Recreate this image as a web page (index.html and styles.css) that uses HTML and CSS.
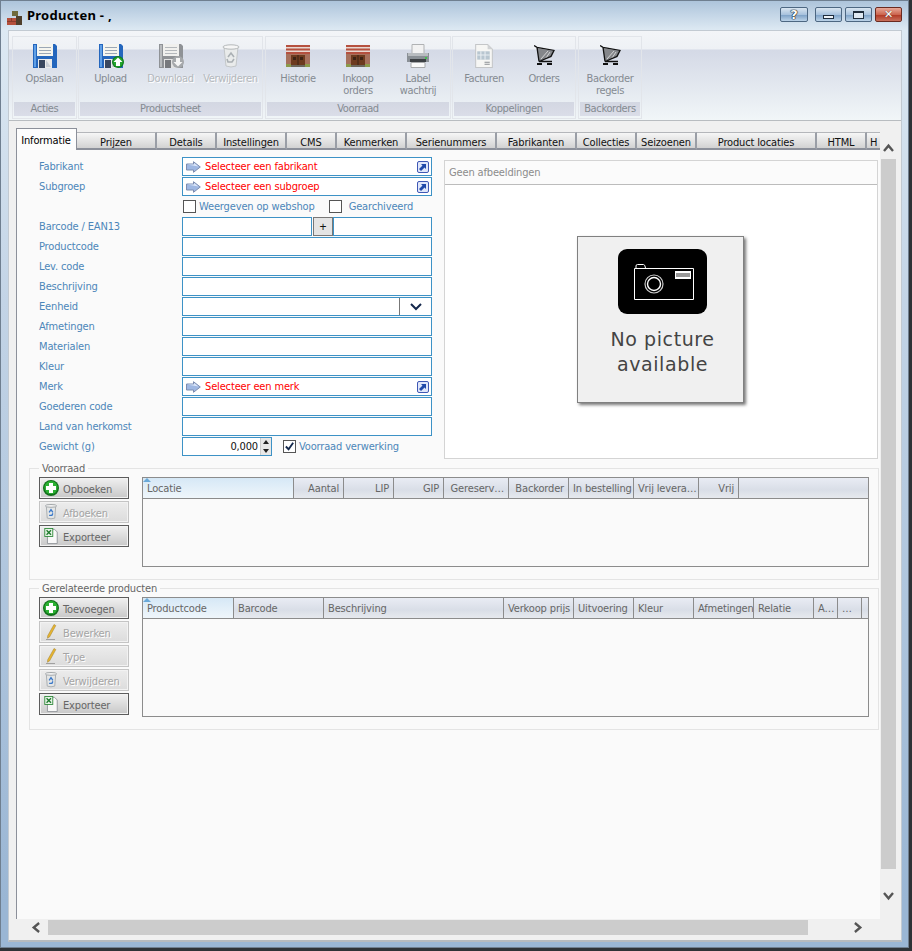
FILE: index.html
```html
<!DOCTYPE html>
<html lang="nl">
<head>
    <meta charset="UTF-8">
    <title>Producten</title>
    <link rel="stylesheet" href="styles.css">
</head>
<body>

<svg class="sprite" xmlns="http://www.w3.org/2000/svg">
    <symbol id="i-bricks" viewBox="0 0 15 14">
        <path fill="#6f6a3c" d="M5 0h6v5H5z"/>
        <path fill="#4f3f2c" d="M9 5h6v9H9z"/>
        <path fill="#b5503c" d="M0 7h9v7H0z"/>
        <path fill="#8a3c2c" d="M0 10h9v1H0zM4 7h1v3H4z"/>
    </symbol>
    <symbol id="i-floppy" viewBox="0 0 24 24">
        <path fill="#2466bd" d="M0 0h22l2 2v22H0z"/>
        <path fill="#5f9fe6" d="M1 1h2v22H1z"/>
        <path fill="#f5f5ef" d="M4 0h16v12H4z"/>
        <path fill="#9aa7b6" d="M6 3h12v1H6zM6 6h12v1H6zM6 9h12v1H6z"/>
        <path fill="#ebebeb" d="M5 15h14v9H5z"/>
        <path fill="#39475f" d="M6 16h6v8H6z"/>
        <path fill="#c9ced6" d="M13 16l5 7h-5z"/>
    </symbol>
    <symbol id="i-floppy-off" viewBox="0 0 24 24">
        <path fill="#8f9296" d="M0 0h22l2 2v22H0z"/>
        <path fill="#b8bbbe" d="M1 1h2v22H1z"/>
        <path fill="#f0f0ee" d="M4 0h16v12H4z"/>
        <path fill="#b4b8bc" d="M6 3h12v1H6zM6 6h12v1H6zM6 9h12v1H6z"/>
        <path fill="#e2e2e2" d="M5 15h14v9H5z"/>
        <path fill="#77797d" d="M6 16h6v8H6z"/>
    </symbol>
    <symbol id="i-up" viewBox="0 0 12 12">
        <circle cx="6" cy="6" r="6" fill="#0f7d1c"/>
        <circle cx="6" cy="6" r="4.8" fill="#24a62c"/>
        <path fill="#fff" d="M6 1.5L10.5 6H8v4H4V6H1.5z"/>
    </symbol>
    <symbol id="i-down" viewBox="0 0 12 12">
        <circle cx="6" cy="6" r="6" fill="#a5a8ab"/>
        <path fill="#f4f4f4" d="M6 10.5L1.5 6H4V2h4v4h2.5z"/>
    </symbol>
    <symbol id="i-plus" viewBox="0 0 16 16">
        <circle cx="8" cy="8" r="8" fill="#126f1b"/>
        <circle cx="8" cy="7.5" r="6.6" fill="#2bb032"/>
        <path fill="#fff" d="M6 3h4v3h3v4h-3v3H6v-3H3V6h3z"/>
    </symbol>
    <symbol id="i-bin" viewBox="0 0 18 24">
        <path fill="#e9ebeb" stroke="#c3c7c9" d="M2 3l2 19q5 2 10 0l2-19z"/>
        <ellipse cx="9" cy="3" rx="8" ry="2.2" fill="#f6f6f6" stroke="#b4b8ba"/>
        <path fill="none" stroke="#aab0b4" stroke-width="1.6" d="M6 13l3-4 3 4M12 15l-2 3H6l-1-3"/>
    </symbol>
    <symbol id="i-bin-small" viewBox="0 0 14 17">
        <path fill="#e4e6e6" stroke="#a8acae" d="M2 2l1 13q4 1.5 8 0l1-13z"/>
        <ellipse cx="7" cy="2" rx="6" ry="1.5" fill="#f2f2f2" stroke="#a0a4a6"/>
        <path fill="none" stroke="#3a78c8" stroke-width="1.4" d="M5 9l2-3 2 3M9 10l-1 2H5"/>
    </symbol>
    <symbol id="i-store" viewBox="0 0 24 22">
        <path fill="#b5503f" d="M0 0h24v9H0z"/>
        <path fill="#e8d8d2" d="M0 2h24v1.500H0zM0 5.500h24V7H0z"/>
        <path fill="#a7705c" d="M0 9h24v11H0z"/>
        <path fill="#6d3a1e" d="M5 10h14v10H5z"/>
        <path fill="#3c2214" d="M11.500 10h1v10h-1zM7 12h3v3H7zM14 12h3v3h-3z"/>
        <path fill="#8c9a4a" d="M0 19h5v3H0zM19 19h5v3h-5z"/>
        <path fill="#6d675c" d="M5 20h14v2H5z"/>
    </symbol>
    <symbol id="i-printer" viewBox="0 0 22 24">
        <path fill="#f2f2f2" stroke="#b0b2b4" d="M5 .500h12v9H5z"/>
        <path fill="#8a9096" d="M0 9h22v9H0z"/>
        <path fill="#b8bcc0" d="M1 9h20v3H1z"/>
        <path fill="#44c050" d="M18 13h2v2h-2z"/>
        <path fill="#3c4044" d="M3 15h16v3H3z"/>
        <path fill="#fafafa" stroke="#a8aaac" d="M4 18.500h14v5H4z"/>
    </symbol>
    <symbol id="i-invoice" viewBox="0 0 17 23">
        <path fill="#f6f6f4" stroke="#c4c6c8" d="M.500.500H12L16.500 5v17.500H.500z"/>
        <path fill="#b8c6d0" d="M2 7h12v8H2z"/>
        <path fill="#e8eef2" d="M5 7h1v8H5zM9 7h1v8H9zM2 10h12v1H2z"/>
        <path fill="#8a8e92" d="M9 17h5v1H9zM9 19h5v1H9z"/>
        <path fill="#d0d2d4" d="M12 .500V5h4.500z"/>
    </symbol>
    <symbol id="i-cart" viewBox="0 -1 21 24">
        <path fill="#84868a" d="M3 3l16 3-2 5-12 5z"/>
        <path fill="none" stroke="#e8e8e8" stroke-width=".8" d="M7 14l7-8M12 13l4-6"/>
        <path fill="none" stroke="#111" stroke-width="1.300" d="M0 .600l3 1.800 17 3-3 6L5 16.500h13M3 2.400l2 14"/>
        <path fill="#111" d="M3 18h5v2H3zM13 18h5v2h-5z"/>
    </symbol>
    <symbol id="i-go" viewBox="0 0 15 12">
        <path fill="#9fb7e2" stroke="#7d8db0" d="M.500 3h7V.700L14.300 6l-6.800 5.300V9h-7z"/>
        <path fill="#dbe6f8" d="M1 3.500h7V2l4.500 3.500z"/>
    </symbol>
    <symbol id="i-link" viewBox="0 0 12 12">
        <rect x=".5" y=".5" width="11" height="11" rx="1.500" fill="#dfe6fa" stroke="#3f58b4"/>
        <path fill="#1f49a8" d="M4 3h5v5L7.500 6.500 4 10 2 8l3.500-3.500z"/>
    </symbol>
    <symbol id="i-pencil" viewBox="0 0 16 16">
        <path fill="#e9b52c" stroke="#a88a3a" stroke-width=".6" d="M11 .500l1.800 1.100L6.500 13l-2 1.200.2-2.400z"/>
        <path stroke="#a0a0a0" d="M3 15.500h9"/>
    </symbol>
    <symbol id="i-excel" viewBox="0 0 15 18">
        <path fill="#f8f8f8" stroke="#8f9498" d="M3.500 1.500h8l3 3v13h-11z"/>
        <path fill="#2f8a3a" d="M0 0h10v10H0z"/>
        <path fill="#e8f4e8" d="M1 1h8v8H1z"/>
        <path fill="none" stroke="#1e7a2c" stroke-width="1.500" d="M2.500 2.500l5 5M7.500 2.500l-5 5"/>
    </symbol>
    <symbol id="i-chev-up" viewBox="0 0 12 10">
        <path fill="none" stroke="#555" stroke-width="2.600" d="M1 9l5-6 5 6"/>
    </symbol>
    <symbol id="i-chev-down" viewBox="0 0 12 10">
        <path fill="none" stroke="#555" stroke-width="2.600" d="M1 1l5 6 5-6"/>
    </symbol>
    <symbol id="i-chev-left" viewBox="0 0 10 12">
        <path fill="none" stroke="#555" stroke-width="2.600" d="M9 1L3 6l6 5"/>
    </symbol>
    <symbol id="i-chev-right" viewBox="0 0 10 12">
        <path fill="none" stroke="#555" stroke-width="2.600" d="M1 1l6 5-6 5"/>
    </symbol>
</svg>

<div class="window">

    <header class="titlebar">
        <svg class="title-icon"><use href="#i-bricks"/></svg>
        <h1 class="title">Producten - ,</h1>
        <div class="caption">
            <button class="cap cap-help" type="button">?</button>
            <button class="cap cap-min" type="button"><span class="cap-glyph"></span></button>
            <button class="cap cap-max" type="button"><span class="cap-glyph"></span></button>
            <button class="cap cap-close" type="button">&#10005;</button>
        </div>
    </header>

    <div class="client">

        <!-- ribbon -->
        <div class="ribbon">
            <section class="group group-acties">
                <div class="group-items">
                    <div class="item">
                        <svg class="ico24"><use href="#i-floppy"/></svg>
                        <span>Opslaan</span>
                    </div>
                </div>
                <div class="group-name">Acties</div>
            </section>
            <section class="group group-sheet">
                <div class="group-items">
                    <div class="item">
                        <span class="ico-stack">
                            <svg class="ico24"><use href="#i-floppy"/></svg>
                            <svg class="ico-badge"><use href="#i-up"/></svg>
                        </span>
                        <span>Upload</span>
                    </div>
                    <div class="item item-off">
                        <span class="ico-stack">
                            <svg class="ico24"><use href="#i-floppy-off"/></svg>
                            <svg class="ico-badge"><use href="#i-down"/></svg>
                        </span>
                        <span>Download</span>
                    </div>
                    <div class="item item-off">
                        <svg class="ico-bin"><use href="#i-bin"/></svg>
                        <span>Verwijderen</span>
                    </div>
                </div>
                <div class="group-name">Productsheet</div>
            </section>
            <section class="group group-stock">
                <div class="group-items">
                    <div class="item">
                        <svg class="ico24"><use href="#i-store"/></svg>
                        <span>Historie</span>
                    </div>
                    <div class="item">
                        <svg class="ico24"><use href="#i-store"/></svg>
                        <span>Inkoop<br>orders</span>
                    </div>
                    <div class="item">
                        <svg class="ico24"><use href="#i-printer"/></svg>
                        <span>Label<br>wachtrij</span>
                    </div>
                </div>
                <div class="group-name">Voorraad</div>
            </section>
            <section class="group group-links">
                <div class="group-items">
                    <div class="item">
                        <svg class="ico24"><use href="#i-invoice"/></svg>
                        <span>Facturen</span>
                    </div>
                    <div class="item">
                        <svg class="ico-cart"><use href="#i-cart"/></svg>
                        <span>Orders</span>
                    </div>
                </div>
                <div class="group-name">Koppelingen</div>
            </section>
            <section class="group group-back">
                <div class="group-items">
                    <div class="item">
                        <svg class="ico-cart"><use href="#i-cart"/></svg>
                        <span>Backorder<br>regels</span>
                    </div>
                </div>
                <div class="group-name">Backorders</div>
            </section>
        </div>

        <div class="workspace">
            <div class="main">

                <nav class="tabs">
                    <a class="tab tab-active">Informatie</a>
                    <a class="tab w80">Prijzen</a>
                    <a class="tab w60">Details</a>
                    <a class="tab w70">Instellingen</a>
                    <a class="tab w50">CMS</a>
                    <a class="tab w70">Kenmerken</a>
                    <a class="tab w90">Serienummers</a>
                    <a class="tab w80">Fabrikanten</a>
                    <a class="tab w60">Collecties</a>
                    <a class="tab w60">Seizoenen</a>
                    <a class="tab w120">Product locaties</a>
                    <a class="tab w50">HTML</a>
                    <a class="tab tab-cut">H</a>
                </nav>

                <div class="content">
                    <div class="top">
                        <form class="form">
                            <label>Fabrikant</label>
                            <div class="picker">
                                <svg class="picker-go"><use href="#i-go"/></svg>
                                <span class="picker-text">Selecteer een fabrikant</span>
                                <svg class="picker-link"><use href="#i-link"/></svg>
                            </div>

                            <label>Subgroep</label>
                            <div class="picker">
                                <svg class="picker-go"><use href="#i-go"/></svg>
                                <span class="picker-text">Selecteer een subgroep</span>
                                <svg class="picker-link"><use href="#i-link"/></svg>
                            </div>

                            <span></span>
                            <div class="checks">
                                <span class="box"></span>
                                <label class="check-web">Weergeven op webshop</label>
                                <span class="box box-second"></span>
                                <label class="check-arch">Gearchiveerd</label>
                            </div>

                            <label>Barcode / EAN13</label>
                            <div class="barcode">
                                <input class="field field-code" type="text">
                                <button class="plus" type="button">+</button>
                                <input class="field field-rest" type="text">
                            </div>

                            <label>Productcode</label>
                            <input class="field" type="text">
                            <label>Lev. code</label>
                            <input class="field" type="text">
                            <label>Beschrijving</label>
                            <input class="field" type="text">

                            <label>Eenheid</label>
                            <div class="combo">
                                <span class="combo-btn">
                                    <svg class="combo-chev" viewBox="0 0 12 8"><path fill="none" stroke="#14284c" stroke-width="2" d="M1 1l5 5 5-5"/></svg>
                                </span>
                            </div>

                            <label>Afmetingen</label>
                            <input class="field" type="text">
                            <label>Materialen</label>
                            <input class="field" type="text">
                            <label>Kleur</label>
                            <input class="field" type="text">

                            <label>Merk</label>
                            <div class="picker">
                                <svg class="picker-go"><use href="#i-go"/></svg>
                                <span class="picker-text">Selecteer een merk</span>
                                <svg class="picker-link"><use href="#i-link"/></svg>
                            </div>

                            <label>Goederen code</label>
                            <input class="field" type="text">
                            <label>Land van herkomst</label>
                            <input class="field" type="text">

                            <label>Gewicht (g)</label>
                            <div class="weight">
                                <div class="spin">
                                    <span class="spin-value">0,000</span>
                                    <span class="spin-btns">
                                        <span class="spin-up"></span>
                                        <span class="spin-down"></span>
                                    </span>
                                </div>
                                <span class="box box-checked">
                                    <svg viewBox="0 0 12 12"><path fill="none" stroke="#14284c" stroke-width="2" d="M2 6l3 3 5-7"/></svg>
                                </span>
                                <label class="check-stock">Voorraad verwerking</label>
                            </div>
                        </form>

                        <div class="pictures">
                            <div class="pictures-head">Geen afbeeldingen</div>
                            <div class="pictures-body">
                                <div class="nopic">
                                    <svg class="nopic-icon" viewBox="0 0 89 65">
                                        <rect width="89" height="65" rx="9" fill="#000"/>
                                        <path fill="none" stroke="#fff" stroke-width="1" d="M16.500 19.500h59v31h-59zM18 19v-2q0-1.500 1.500-1.500h6q1.500 0 2 3.500"/>
                                        <circle cx="36" cy="35" r="9" fill="none" stroke="#ccc" stroke-width="1.200"/>
                                        <circle cx="36" cy="35" r="6.500" fill="none" stroke="#fff" stroke-width="1.400"/>
                                        <rect x="57" y="22" width="16" height="8" fill="#fff"/>
                                        <path stroke="#333" d="M59 24v4M61 24v4M63 24v4M65 24v4M67 24v4M69 24v4M71 24v4"/>
                                    </svg>
                                    <p class="nopic-text">No picture<br>available</p>
                                </div>
                            </div>
                        </div>
                    </div>

                    <fieldset class="set set-stock">
                        <legend>Voorraad</legend>
                        <div class="set-row">
                            <div class="actions">
                                <button class="btn" type="button"><svg class="btn-ico"><use href="#i-plus"/></svg>Opboeken</button>
                                <button class="btn btn-off" type="button"><svg class="btn-ico"><use href="#i-bin-small"/></svg>Afboeken</button>
                                <button class="btn" type="button"><svg class="btn-ico"><use href="#i-excel"/></svg>Exporteer</button>
                            </div>
                            <div class="grid grid-stock">
                                <div class="grid-head">
                                    <span class="col col-sorted">Locatie</span>
                                    <span class="col col-num">Aantal</span>
                                    <span class="col col-num">LIP</span>
                                    <span class="col col-num">GIP</span>
                                    <span class="col col-num">Gereserv…</span>
                                    <span class="col col-num">Backorder</span>
                                    <span class="col col-num">In bestelling</span>
                                    <span class="col col-num">Vrij levera…</span>
                                    <span class="col col-num">Vrij</span>
                                    <span class="col col-fill"></span>
                                </div>
                            </div>
                        </div>
                    </fieldset>

                    <fieldset class="set set-related">
                        <legend>Gerelateerde producten</legend>
                        <div class="set-row">
                            <div class="actions">
                                <button class="btn" type="button"><svg class="btn-ico"><use href="#i-plus"/></svg>Toevoegen</button>
                                <button class="btn btn-off" type="button"><svg class="btn-ico"><use href="#i-pencil"/></svg>Bewerken</button>
                                <button class="btn btn-off" type="button"><svg class="btn-ico"><use href="#i-pencil"/></svg>Type</button>
                                <button class="btn btn-off" type="button"><svg class="btn-ico"><use href="#i-bin-small"/></svg>Verwijderen</button>
                                <button class="btn" type="button"><svg class="btn-ico"><use href="#i-excel"/></svg>Exporteer</button>
                            </div>
                            <div class="grid grid-related">
                                <div class="grid-head">
                                    <span class="col col-sorted">Productcode</span>
                                    <span class="col">Barcode</span>
                                    <span class="col">Beschrijving</span>
                                    <span class="col">Verkoop prijs</span>
                                    <span class="col">Uitvoering</span>
                                    <span class="col">Kleur</span>
                                    <span class="col">Afmetingen</span>
                                    <span class="col">Relatie</span>
                                    <span class="col">A…</span>
                                    <span class="col">…</span>
                                    <span class="col col-fill"></span>
                                </div>
                            </div>
                        </div>
                    </fieldset>
                </div>

                <div class="hscroll">
                    <svg class="chev-h"><use href="#i-chev-left"/></svg>
                    <div class="hthumb"></div>
                    <svg class="chev-h chev-right"><use href="#i-chev-right"/></svg>
                </div>
            </div>

            <div class="vscroll">
                <svg class="chev-v"><use href="#i-chev-up"/></svg>
                <div class="vthumb"></div>
                <svg class="chev-v chev-down"><use href="#i-chev-down"/></svg>
            </div>
        </div>
    </div>
</div>

</body>
</html>
```

FILE: styles.css
```css
* {
    box-sizing: border-box;
}
html, body {
    height: 100%;
    margin: 0;
    overflow: hidden;
}
body {
    background: #2e3236;
    font-family: "DejaVu Sans Condensed", "Noto Sans", sans-serif;
    font-size: 11px;
    letter-spacing: -.15px;
    color: #555;
}
.sprite {
    display: none;
}

/* window frame */
.window {
    width: 909px;
    height: 948px;
    display: flex;
    flex-direction: column;
    border: 1px solid #6f7f90;
    background: linear-gradient(#adc4db 0, #dde9f3 29px, #c3d4e6 300px, #9ab6d4 900px);
}
.titlebar {
    height: 29px;
    flex: none;
    display: flex;
    align-items: center;
    padding: 2px 6px 0 6px;
}
.title-icon {
    width: 15px;
    height: 14px;
    margin-top: 2px;
}
.title {
    margin: -4px 0 0 5px;
    font-family: "Noto Sans", sans-serif;
    font-size: 13px;
    font-weight: bold;
    letter-spacing: .25px;
    color: #000;
}
.caption {
    margin-left: auto;
    display: flex;
    gap: 3px;
    margin-top: -4px;
}
.cap {
    width: 27px;
    height: 15px;
    padding: 0;
    border: 1px solid #4d6782;
    border-radius: 2px;
    background: linear-gradient(#d9e5f0, #a9c3de 50%, #7fa3c8 55%, #bcd3e8);
    color: #fff;
    font-family: "DejaVu Sans", sans-serif;
    font-size: 11px;
    line-height: 12px;
    display: flex;
    align-items: center;
    justify-content: center;
}
.cap-help {
    width: 28px;
    margin-right: 4px;
    font-weight: bold;
    font-size: 13px;
    text-shadow: 0 0 1px #000, 0 0 1px #000, 0 0 1px #000;
}
.cap-close {
    background: linear-gradient(#e8a898, #cc6650 50%, #b23a26 55%, #c8705c);
    border-color: #6a2a20;
    font-weight: bold;
    text-shadow: 0 0 1px #333;
}
.cap-glyph {
    display: block;
    flex: none;
    border: 1px solid #1e2c3c;
    background: #eef3f8;
}
.cap-min .cap-glyph {
    width: 11px;
    height: 4px;
    margin-top: 4px;
}
.cap-max .cap-glyph {
    width: 11px;
    height: 8px;
    border-width: 2px 1px 1px;
    background: #dfe9f3;
}

.client {
    flex: 1;
    margin: 0 6px 5px 7px;
    display: flex;
    flex-direction: column;
    min-height: 0;
    background: #f0f0f0;
    border: 1px solid #c2cad2;
    border-bottom: 2px solid #b6babe;
}

/* ribbon */
.ribbon {
    height: 90px;
    flex: none;
    display: flex;
    padding: 5px 0 0 3px;
    border-bottom: 1px solid #b8bcc0;
    background: linear-gradient(#f3f5f8 0, #eef1f5 18px, #d4d9e6 19px, #f1f6f8 89px);
}
.group {
    height: 83px;
    display: flex;
    flex-direction: column;
    padding: 0 1px 2px;
    border: 1px solid #e2e5ea;
    letter-spacing: -.35px;
}
.group-acties { width: 65px; margin-right: 1px; }
.group-sheet { width: 185px; margin-right: 2px; }
.group-stock { width: 186px; margin-right: 1px; }
.group-links { width: 124px; margin-right: 2px; }
.group-back { width: 64px; }
.group-items {
    flex: 1;
    display: flex;
    justify-content: center;
}
.item {
    width: 60px;
    padding-top: 7px;
    display: flex;
    flex-direction: column;
    align-items: center;
    text-align: center;
    line-height: 12px;
    color: #858b92;
}
.item span:last-child {
    margin-top: 5px;
}
.item-off {
    color: #b4b8bc;
    text-shadow: 1px 1px 0 #fff;
}
.ico24 {
    width: 24px;
    height: 24px;
    flex: none;
}
.ico-bin {
    width: 18px;
    height: 24px;
    flex: none;
}
.ico-cart {
    width: 21px;
    height: 24px;
    flex: none;
}
.ico-stack {
    display: flex;
    width: 24px;
    height: 24px;
    flex: none;
    position: relative;
}
.ico-badge {
    position: absolute;
    right: -1px;
    bottom: 0;
    width: 12px;
    height: 12px;
}
.group-name {
    height: 14px;
    flex: none;
    text-align: center;
    line-height: 14px;
    color: #858b92;
    background: linear-gradient(#d3d7e2, #dadde8);
}

/* tabs and content */
.workspace {
    flex: 1;
    min-height: 0;
    display: flex;
    padding: 7px 0 5px 7px;
}
.main {
    width: 864px;
    display: flex;
    flex-direction: column;
}
.tabs {
    height: 22px;
    flex: none;
    display: flex;
    align-items: flex-end;
    overflow: hidden;
}
.tab {
    height: 18px;
    flex: none;
    text-align: center;
    line-height: 19px;
    color: #111;
    background: linear-gradient(#f6f6f6, #d2d2d2);
    border-top: 1px solid #b4b6ba;
    border-right: 2px solid #9a9ea6;
    border-bottom: 2px solid #8c909a;
}
.w50 { width: 50px; }
.w60 { width: 60px; }
.w70 { width: 70px; }
.w80 { width: 80px; }
.w90 { width: 90px; }
.w120 { width: 120px; }
.tab-active {
    width: 61px;
    height: 22px;
    padding-right: 1px;
    line-height: 24px;
    color: #000;
    background: #fdfdfd;
    border: 1px solid #8c909a;
    border-bottom: 0;
}
.tab-cut {
    width: 13px;
    text-align: left;
    padding-left: 3px;
    border-right: 0;
}
.content {
    flex: 1;
    min-height: 0;
    padding: 7px 0 0 0;
    background: #fafafa;
    border-left: 1px solid #8c909a;
}
.top {
    display: flex;
    height: 302px;
}

/* form */
.form {
    width: 415px;
    padding-left: 22px;
    display: grid;
    grid-template-columns: 143px 250px;
    grid-auto-rows: 19px;
    row-gap: 1px;
    align-items: center;
}
.form label {
    color: #4c86b9;
    line-height: 15px;
}
.field, .picker, .combo, .spin {
    width: 100%;
    height: 19px;
    margin: 0;
    border: 1px solid #3d92c6;
    background: #fff;
    border-radius: 0;
    outline: none;
}
.picker {
    display: flex;
    align-items: center;
    padding: 0 2px 0 3px;
}
.picker-go {
    width: 15px;
    height: 12px;
    flex: none;
}
.picker-text {
    margin-left: 4px;
    color: #f00;
}
.picker-link {
    width: 12px;
    height: 12px;
    margin-left: auto;
}
.checks {
    height: 19px;
    display: flex;
    align-items: center;
}
.box {
    width: 13px;
    height: 13px;
    flex: none;
    border: 1px solid #555;
    background: #fff;
    margin-left: 1px;
    display: block;
}
.check-web {
    margin-left: 3px;
    margin-top: -1px;
}
.box-second {
    margin-left: 14px;
}
.check-arch {
    margin-left: 7px;
    margin-top: -1px;
}
.barcode {
    display: flex;
}
.field-code {
    width: 130px;
    flex: none;
}
.plus {
    width: 20px;
    height: 19px;
    flex: none;
    margin-left: 1px;
    padding: 0;
    border: 1px solid #777;
    background: #e4e4e4;
    color: #111;
    font-size: 12px;
    line-height: 16px;
}
.field-rest {
    flex: 1;
    min-width: 0;
}
.combo {
    display: flex;
    justify-content: flex-end;
}
.combo-btn {
    width: 32px;
    border-left: 1px solid #777;
    display: flex;
    align-items: center;
    justify-content: center;
}
.combo-chev {
    width: 12px;
    height: 8px;
}
.weight {
    display: flex;
    align-items: center;
}
.spin {
    width: 90px;
    flex: none;
    display: flex;
    align-items: center;
    justify-content: flex-end;
}
.spin-value {
    color: #111;
    padding-right: 2px;
}
.spin-btns {
    width: 11px;
    height: 17px;
    flex: none;
    display: flex;
    flex-direction: column;
    background: #e8e8e8;
    border-left: 1px solid #ccc;
}
.spin-up, .spin-down {
    flex: 1;
    display: flex;
    align-items: center;
    justify-content: center;
}
.spin-up::before {
    content: "";
    border: 3px solid transparent;
    border-top: 0;
    border-bottom: 4px solid #222;
}
.spin-down::before {
    content: "";
    border: 3px solid transparent;
    border-bottom: 0;
    border-top: 4px solid #222;
}
.box-checked {
    margin-left: 11px;
}
.box-checked svg {
    display: block;
    width: 11px;
    height: 11px;
}
.check-stock {
    margin-left: 3px;
    margin-top: -1px;
}

/* pictures */
.pictures {
    width: 434px;
    height: 299px;
    margin: 3px 0 0 12px;
    display: flex;
    flex-direction: column;
    border: 1px solid #d4d4d4;
    background: #fff;
}
.pictures-head {
    height: 24px;
    flex: none;
    padding-left: 4px;
    line-height: 23px;
    color: #8c8c8c;
    background: #fbfbfb;
    border-bottom: 1px solid #bcbcbc;
}
.pictures-body {
    flex: 1;
    display: flex;
    align-items: center;
    justify-content: center;
    padding: 0 1px 4px 0;
}
.nopic {
    width: 167px;
    height: 167px;
    display: flex;
    flex-direction: column;
    align-items: center;
    padding: 12px 0 0 4px;
    background: #f0f0f0;
    border: 1px solid #808080;
    box-shadow: 2px 2px 3px #777;
}
.nopic-icon {
    width: 89px;
    height: 65px;
    flex: none;
}
.nopic-text {
    margin: 13px 0 0;
    font-family: "DejaVu Sans", sans-serif;
    font-size: 19px;
    line-height: 25px;
    letter-spacing: .6px;
    color: #444;
    text-align: center;
}

/* group boxes */
.set {
    margin: 3px 0 0 12px;
    padding: 0 9px;
    width: 850px;
    border: 1px solid #e4e4e4;
    min-width: 0;
}
.set-stock {
    height: 118px;
}
.set-related {
    height: 148px;
    margin-top: 2px;
}
.set legend {
    padding: 0 3px;
    line-height: 13px;
    color: #666;
}
.set-row {
    display: flex;
    gap: 13px;
    padding-top: 2px;
}
.actions {
    width: 90px;
    flex: none;
    display: flex;
    flex-direction: column;
    gap: 2px;
}
.btn {
    height: 22px;
    display: flex;
    align-items: center;
    gap: 4px;
    padding: 2px 0 0 3px;
    font: inherit;
    letter-spacing: inherit;
    color: #666;
    border: 1px solid #5c5c5c;
    box-shadow: inset 0 0 0 1px #f2f2f2;
    background: linear-gradient(#f0f0f0, #c8c8c8);
}
.btn-off {
    color: #a4a4a4;
    text-shadow: 1px 1px 0 #fff;
    border-color: #c4c4c4;
    background: linear-gradient(#ececec, #dcdcdc);
}
.btn-ico {
    width: 16px;
    height: 16px;
    flex: none;
    margin-top: -2px;
}

/* data grids */
.grid {
    width: 727px;
    border: 1px solid #8c8c8c;
    background: #fafafa;
}
.grid-stock {
    height: 90px;
}
.grid-related {
    height: 120px;
}
.grid-head {
    height: 21px;
    display: grid;
    border-bottom: 1px solid #8c8c8c;
    background: linear-gradient(#e9ecf4, #d9dee7 60%, #e6e9ee);
}
.grid-stock .grid-head {
    grid-template-columns: 151px 50px 50px 50px 65px 60px 65px 65px 40px 1fr;
}
.grid-related .grid-head {
    grid-template-columns: 91px 90px 180px 70px 60px 60px 60px 60px 24px 24px 1fr;
}
.col {
    padding: 0 4px;
    overflow: hidden;
    white-space: nowrap;
    line-height: 22px;
    color: #666;
    border-right: 1px solid #8c8c8c;
}
.col-num {
    text-align: right;
}
.col-fill {
    border-right: 0;
}
.col-sorted {
    position: relative;
    background: linear-gradient(#d6e8f6, #eff6fb);
}
.col-sorted::before {
    content: "";
    position: absolute;
    left: 0;
    top: 0;
    border: 4px solid transparent;
    border-top: 0;
    border-bottom: 4px solid #6aa9d8;
}

/* scrollbars */
.hscroll {
    height: 15px;
    flex: none;
    margin-top: 1px;
    display: flex;
    align-items: center;
    padding-left: 15px;
}
.hthumb {
    width: 760px;
    height: 15px;
    margin: 0 46px 0 8px;
    background: #ccc;
}
.chev-h {
    width: 9px;
    height: 11px;
    flex: none;
}
.vscroll {
    width: 15px;
    margin-left: 1px;
    display: flex;
    flex-direction: column;
    align-items: center;
    padding-top: 15px;
}
.vthumb {
    width: 15px;
    height: 710px;
    margin: 7px 0 23px;
    background: #ccc;
}
.chev-v {
    width: 11px;
    height: 9px;
    flex: none;
}
```
